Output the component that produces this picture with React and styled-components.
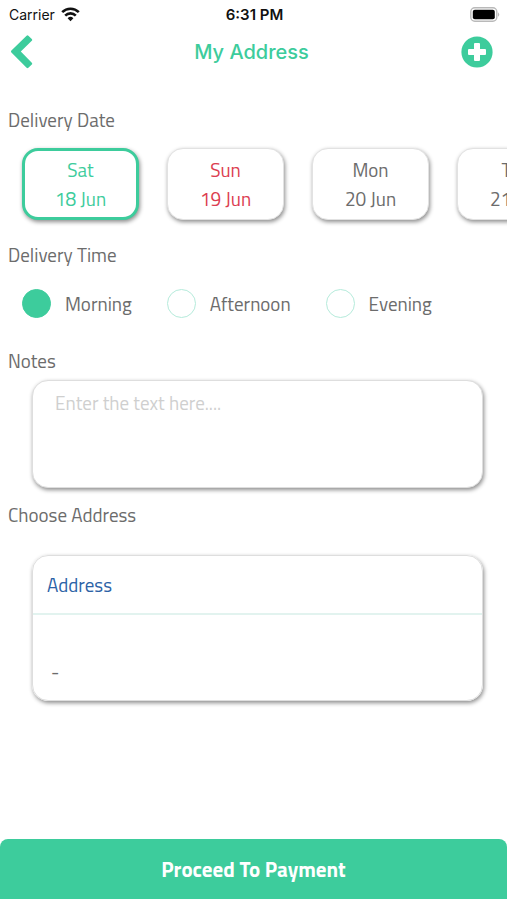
import React, { useState } from 'react'
import styled, { createGlobalStyle } from 'styled-components'

const GREEN = '#3dcc9c'

const GlobalStyle = createGlobalStyle`
    * {
        box-sizing: border-box;
    }
    body {
        margin: 0;
        background: #fff;
        color: #6c6c6c;
        font-family: "Titillium Web", Roboto, sans-serif;
        font-size: 19px;
        line-height: 29px;
    }
    button, textarea {
        font: inherit;
    }
`;

const Screen = styled.div`
    display: flex;
    flex-direction: column;
    min-height: 100vh;
    padding-bottom: 1px;
    overflow-x: hidden;
`;

const StatusBar = styled.div`
    display: grid;
    grid-template-columns: 1fr auto 1fr;
    align-items: center;
    height: 28px;
    padding: 0 7px 0 9px;
    color: #111;
    font-family: Inter, sans-serif;
    font-size: 14px;
`;

const Carrier = styled.span`
    display: flex;
    align-items: center;
    gap: 6px;
`;

const Clock = styled.span`
    font-size: 15px;
    font-weight: 600;
`;

const BatteryIcon = styled.svg`
    justify-self: end;
`;

const Header = styled.header`
    display: grid;
    grid-template-columns: 1fr auto 1fr;
    align-items: center;
    height: 48px;
    padding: 0 14px 0 10px;
`;

const Title = styled.h1`
    margin: 0;
    color: ${GREEN};
    font-family: Inter, sans-serif;
    font-size: 20px;
    font-weight: 500;
`;

const IconButton = styled.button`
    display: flex;
    justify-self: ${props => props.$end ? 'end' : 'start'};
    padding: 0;
    border: 0;
    background: none;
    color: ${GREEN};
    cursor: pointer;
`;

const Form = styled.form`
    display: flex;
    flex-direction: column;
    flex: 1;
    padding-top: 29px;
`;

const Label = styled.label`
    display: block;
    padding: 0 8px;
`;

const DateList = styled.div`
    display: flex;
    gap: 28px;
    padding: 14px 22px 20px;
    overflow-x: auto;
    scrollbar-width: none;
`;

const DateCard = styled.button`
    flex: 0 0 117px;
    height: 72px;
    padding: 0;
    border: ${props => props.$active ? `3px solid ${GREEN}` : '1px solid #e2e2e2'};
    border-radius: 16px;
    background: #fff;
    box-shadow: 1px 2px 4px rgba(0, 0, 0, 0.45);
    color: ${props => props.$active ? GREEN : props.$holiday ? '#dc3d50' : 'inherit'};
    cursor: pointer;
`;

const Line = styled.span`
    display: block;
`;

const TimeList = styled.div`
    display: flex;
    gap: 35px;
    padding: 20px 22px 28px;
`;

const TimeOption = styled.label`
    display: flex;
    align-items: center;
    gap: 14px;
`;

const Radio = styled.input`
    appearance: none;
    width: 29px;
    height: 29px;
    margin: 0;
    border: 1px solid #b5ebdb;
    border-radius: 50%;
    &:checked {
        border-color: ${GREEN};
        background: ${GREEN};
    }
`;

const Notes = styled.textarea`
    display: block;
    height: 108px;
    margin: 5px 24px 12px 32px;
    padding: 7px 22px;
    border: 1px solid #dedede;
    border-radius: 16px;
    outline: none;
    box-shadow: 1px 2px 4px rgba(0, 0, 0, 0.45);
    color: inherit;
    resize: none;
    &::placeholder {
        color: #cfcfcf;
    }
`;

const AddressCard = styled.section`
    margin: 26px 24px 24px 32px;
    border: 1px solid #dedede;
    border-radius: 16px;
    box-shadow: 1px 2px 4px rgba(0, 0, 0, 0.45);
`;

const AddressTitle = styled.h2`
    margin: 0;
    padding: 14px;
    border-bottom: 2px solid #e2f3ef;
    color: #2c62a6;
    font-size: 19px;
    font-weight: 400;
`;

const AddressText = styled.p`
    margin: 0;
    padding: 42px 18px 14px;
`;

const Submit = styled.button`
    height: 60px;
    margin-top: auto;
    border: 0;
    border-radius: 8px 8px 0 0;
    background: ${GREEN};
    color: #fff;
    font-size: 21px;
    font-weight: 700;
    cursor: pointer;
`;

const dates = [
    { day: 'Sat', date: '18 Jun' },
    { day: 'Sun', date: '19 Jun', holiday: true },
    { day: 'Mon', date: '20 Jun' },
    { day: 'Tue', date: '21 Jun' },
]

const times = ['Morning', 'Afternoon', 'Evening']

const App = () => {
    const [date, setDate] = useState('18 Jun')
    const [time, setTime] = useState('Morning')
    const [notes, setNotes] = useState('')

    return (
        <Screen>
            <GlobalStyle />
            <StatusBar>
                <Carrier>
                    Carrier
                    <svg width="19" height="15" viewBox="0 0 19 15" fill="none" stroke="#111" strokeWidth="2.6">
                        <path d="M1.2 5.2a11.8 11.8 0 0 1 16.6 0" />
                        <path d="M4.2 8.6a7.5 7.5 0 0 1 10.6 0" />
                        <path d="M9.5 14.2 6.6 11.3a4.1 4.1 0 0 1 5.8 0z" fill="#111" stroke="none" />
                    </svg>
                </Carrier>
                <Clock>6:31 PM</Clock>
                <BatteryIcon width="30" height="15" viewBox="0 0 30 15">
                    <rect x="0.8" y="0.8" width="26" height="13.4" rx="4" fill="#fff" stroke="#b9b9b9" strokeWidth="1.4" />
                    <rect x="2.8" y="2.8" width="22" height="9.4" rx="2" fill="#000" />
                    <path d="M28.2 5.2q2 2.3 0 4.6z" fill="#aaa" />
                </BatteryIcon>
            </StatusBar>
            <Header>
                <IconButton type="button" aria-label="Back">
                    <svg width="24" height="34" viewBox="0 0 24 34">
                        <path d="M16.6.7q.9-.8 1.8 0l3.4 3.3q.8.9 0 1.7L10.8 16.5l11 11.3q.8.9 0 1.7l-3.4 3.3q-.9.8-1.8 0L1.4 17.4q-.8-.9 0-1.8z" fill={GREEN} />
                    </svg>
                </IconButton>
                <Title>My Address</Title>
                <IconButton type="button" aria-label="Add address" $end>
                    <svg width="32" height="32" viewBox="0 0 32 32">
                        <circle cx="16" cy="16" r="15.6" fill={GREEN} />
                        <path d="M14 7h4q1 0 1 1v5h5q1 0 1 1v4q0 1-1 1h-5v5q0 1-1 1h-4q-1 0-1-1v-5H8q-1 0-1-1v-4q0-1 1-1h5V8q0-1 1-1z" fill="#fff" />
                    </svg>
                </IconButton>
            </Header>
            <Form onSubmit={e => e.preventDefault()}>
                <Label as="div" id="date-label">Delivery Date</Label>
                <DateList role="group" aria-labelledby="date-label">
                    {dates.map(item => (
                        <DateCard
                            key={item.date}
                            type="button"
                            aria-pressed={item.date === date}
                            $active={item.date === date}
                            $holiday={item.holiday}
                            onClick={() => setDate(item.date)}
                        >
                            <Line>{item.day}</Line>
                            <Line>{item.date}</Line>
                        </DateCard>
                    ))}
                </DateList>
                <Label as="div" id="time-label">Delivery Time</Label>
                <TimeList role="radiogroup" aria-labelledby="time-label">
                    {times.map(item => (
                        <TimeOption key={item}>
                            <Radio
                                type="radio"
                                name="time"
                                value={item}
                                checked={item === time}
                                onChange={() => setTime(item)}
                            />
                            {item}
                        </TimeOption>
                    ))}
                </TimeList>
                <Label htmlFor="notes">Notes</Label>
                <Notes
                    id="notes"
                    placeholder="Enter the text here...."
                    value={notes}
                    onChange={e => setNotes(e.target.value)}
                />
                <Label as="div">Choose Address</Label>
                <AddressCard>
                    <AddressTitle>Address</AddressTitle>
                    <AddressText>-</AddressText>
                </AddressCard>
                <Submit type="submit">Proceed To Payment</Submit>
            </Form>
        </Screen>
    )
}

export default App
